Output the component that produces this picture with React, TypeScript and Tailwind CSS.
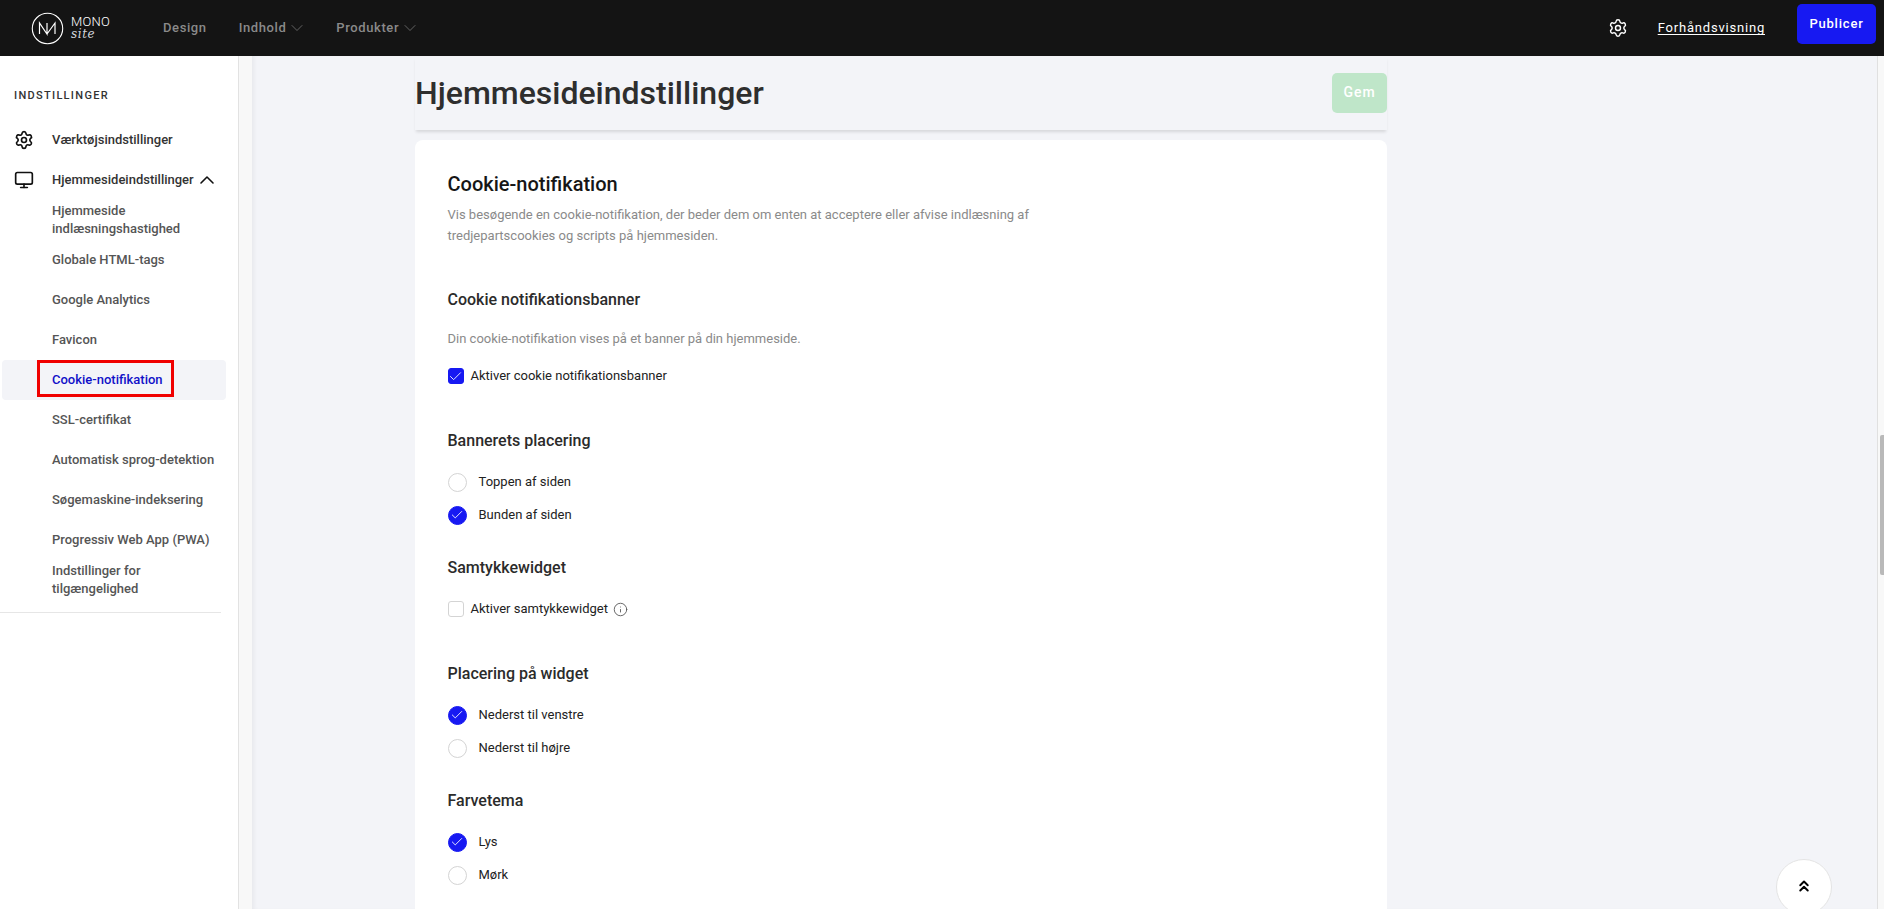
import { Check, ChevronDown, ChevronUp, ChevronsUp, Info, Monitor, Settings } from 'lucide-react';

const subItems = [
  { label: 'Globale HTML-tags' },
  { label: 'Google Analytics' },
  { label: 'Favicon' },
  { label: 'Cookie-notifikation', active: true },
  { label: 'SSL-certifikat' },
  { label: 'Automatisk sprog-detektion' },
  { label: 'Søgemaskine-indeksering' },
  { label: 'Progressiv Web App (PWA)' },
];

function Logo() {
  return (
    <div className="flex items-center gap-[7px] text-white">
      <svg width="33" height="33" viewBox="0 0 33 33" fill="none" stroke="currentColor">
        <circle cx="16.5" cy="16.5" r="15.2" strokeWidth="1.1" />
        <path d="M8.5 22V11L16 22V11M16 22L24 11V22" strokeWidth="1.2" fill="none" />
      </svg>
      <div className="flex w-[40px] flex-col leading-none">
        <span className="text-[13px] font-light tracking-[0.2px] leading-[13px]">MONO</span>
        <span className="text-[12px] font-light italic tracking-[0.6px] leading-[13px] text-gray-300 [font-family:'DejaVu_Serif',serif]">site</span>
      </div>
    </div>
  );
}

function Header() {
  return (
    <header className="h-14 shrink-0 bg-[#141414] flex items-center pl-[31px] pr-[8px]">
      <Logo />
      <nav className="flex items-center ml-[52px] text-[13px] font-medium tracking-[0.6px] text-[#8a8a8a]">
        <span>Design</span>
        <span className="flex items-center ml-[32px] gap-[1px]">
          Indhold <ChevronDown size={20} strokeWidth={0.8} />
        </span>
        <span className="flex items-center ml-[29px] gap-[1px]">
          Produkter <ChevronDown size={20} strokeWidth={0.8} />
        </span>
      </nav>
      <div className="ml-auto flex items-center">
        <Settings size={20} strokeWidth={1.7} className="text-white" />
        <span className="ml-[30px] text-[13px] tracking-[0.8px] text-white underline underline-offset-2">Forhåndsvisning</span>
        <button className="ml-[32px] mb-[8px] h-10 w-[79px] rounded-[5px] bg-[#1719f2] text-[13px] font-medium tracking-[0.8px] text-white">Publicer</button>
      </div>
    </header>
  );
}

function Sidebar() {
  return (
    <aside className="w-[239px] shrink-0 border-r border-[#e2e2e2] bg-white">
      <div className="mr-[17px] border-b border-[#e6e6e6] pb-[14px]">
        <div className="pl-[14px] pt-[33px] text-[11px] font-medium leading-[14px] tracking-[1.3px] text-[#333]">INDSTILLINGER</div>
        <div className="mt-[17px] flex h-10 items-center pl-[14px] text-[13px] font-medium text-[#333]">
          <Settings size={20} strokeWidth={2} className="text-[#111]" />
          <span className="ml-[18px]">Værktøjsindstillinger</span>
        </div>
        <div className="flex h-[39px] items-center pl-[14px] text-[13px] font-medium text-[#333]">
          <Monitor size={20} strokeWidth={2} className="text-[#111]" />
          <span className="ml-[18px]">Hjemmesideindstillinger</span>
          <ChevronUp size={24} strokeWidth={1.6} className="ml-[1px] text-[#111]" />
        </div>
        <div className="pl-[52px] pt-[3px] text-[13px] font-medium leading-[18px] text-[#555]">
          Hjemmeside
          <br />
          indlæsningshastighed
        </div>
        <div className="mt-[2px]">
          {subItems.map((item) => (
            <div
              key={item.label}
              className={
                item.active
                  ? 'relative ml-[2px] mr-[-5px] flex h-10 items-center rounded-[4px] bg-[#f3f4f8] pl-[50px] text-[13px] font-medium text-[#1010c8]'
                  : 'flex h-10 items-center pl-[52px] text-[13px] font-medium text-[#555]'
              }
            >
              {item.label}
              {item.active && <span className="absolute left-[35px] top-0 h-[37px] w-[137px] border-[3px] border-[#f00000]" />}
            </div>
          ))}
        </div>
        <div className="pl-[52px] pt-[2px] text-[13px] font-medium leading-[18px] text-[#555]">
          Indstillinger for
          <br />
          tilgængelighed
        </div>
      </div>
    </aside>
  );
}

function SectionTitle({ children, className }: { children: React.ReactNode; className: string }) {
  return <h3 className={'text-base font-medium leading-5 text-[#2b2b2b] ' + className}>{children}</h3>;
}

function CheckRow({ label, checked, info, className }: { label: string; checked?: boolean; info?: boolean; className: string }) {
  return (
    <div className={'flex h-4 items-center text-[13px] text-[#222] ' + className}>
      <span className={'flex h-4 w-4 items-center justify-center rounded-[3px] border ' + (checked ? 'border-[#1719f2] bg-[#1719f2]' : 'border-[#d4d4d4] bg-white')}>
        {checked && <Check size={15} strokeWidth={1.4} className="shrink-0 text-white" />}
      </span>
      <span className="ml-[7px]">{label}</span>
      {info && <Info size={15} strokeWidth={1.4} className="ml-[5px] text-[#555]" />}
    </div>
  );
}

function RadioRow({ label, checked, className }: { label: string; checked?: boolean; className?: string }) {
  return (
    <div className={'flex h-5 items-center text-[13px] text-[#222] ' + (className ?? '')}>
      <span className={'flex h-[19px] w-[19px] items-center justify-center rounded-full border ' + (checked ? 'border-[#1719f2] bg-[#1719f2]' : 'border-[#d4d4d4] bg-white')}>
        {checked && <Check size={14} strokeWidth={1.5} className="text-white" />}
      </span>
      <span className="ml-[12px]">{label}</span>
    </div>
  );
}

function Content() {
  return (
    <div className="flex w-[972px] flex-col">
      <div className="flex h-[74px] shrink-0 items-center justify-between shadow-[0_3px_3px_-1px_rgba(0,0,0,0.12)]">
        <h1 className="text-[32px] font-medium leading-10 text-[#2e2e2e]">Hjemmesideindstillinger</h1>
        <button className="mb-[1px] h-10 w-[55px] rounded-[5px] bg-[#bfe6c9] text-[14px] font-medium tracking-[1px] text-white">Gem</button>
      </div>
      <section className="mt-[10px] rounded-t-[8px] bg-white pl-[32.5px] pt-[32px]">
        <h2 className="text-[20px] font-medium leading-[24px] text-[#161616]">Cookie-notifikation</h2>
        <p className="mt-[8px] w-[620px] text-[13px] leading-[21px] text-[#8a8a8a]">
          Vis besøgende en cookie-notifikation, der beder dem om enten at acceptere eller afvise indlæsning af tredjepartscookies og scripts på hjemmesiden.
        </p>
        <SectionTitle className="mt-[44px]">Cookie notifikationsbanner</SectionTitle>
        <p className="mt-[20px] text-[13px] leading-[18px] text-[#8a8a8a]">Din cookie-notifikation vises på et banner på din hjemmeside.</p>
        <CheckRow label="Aktiver cookie notifikationsbanner" checked className="mt-[20px]" />
        <SectionTitle className="mt-[47px]">Bannerets placering</SectionTitle>
        <RadioRow label="Toppen af siden" className="mt-[21px]" />
        <RadioRow label="Bunden af siden" checked className="mt-[13px]" />
        <SectionTitle className="mt-[33px]">Samtykkewidget</SectionTitle>
        <CheckRow label="Aktiver samtykkewidget" info className="mt-[23px]" />
        <SectionTitle className="mt-[47px]">Placering på widget</SectionTitle>
        <RadioRow label="Nederst til venstre" checked className="mt-[21px]" />
        <RadioRow label="Nederst til højre" className="mt-[13px]" />
        <SectionTitle className="mt-[33px]">Farvetema</SectionTitle>
        <RadioRow label="Lys" checked className="mt-[21px]" />
        <RadioRow label="Mørk" className="mt-[13px]" />
        <div className="h-20" />
      </section>
    </div>
  );
}

export default function App() {
  return (
    <div className="relative flex h-[909px] flex-col overflow-hidden bg-white [font-family:Roboto,sans-serif]">
      <Header />
      <div className="flex min-h-0 flex-1">
        <Sidebar />
        <div className="w-[13px] shrink-0 bg-[#f8f8f8]" />
        <main className="flex min-w-0 flex-1 bg-[#f3f4f8] pl-[163px] shadow-[inset_4px_0_4px_-2px_rgba(0,0,0,0.05)]">
          <Content />
        </main>
        <div className="w-[7px] shrink-0 border-l border-[#e0e0e0] bg-[#f8f8f8] pl-[2px] pt-[379px]">
          <div className="h-[140px] rounded-l-[2px] bg-[#b9b9b9]" />
        </div>
      </div>
      <button className="absolute left-[1776px] top-[859px] flex h-14 w-14 items-center justify-center rounded-full border border-[#e4e4e4] bg-white">
        <ChevronsUp size={18} strokeWidth={2.6} className="mb-[2px] text-black" />
      </button>
    </div>
  );
}
